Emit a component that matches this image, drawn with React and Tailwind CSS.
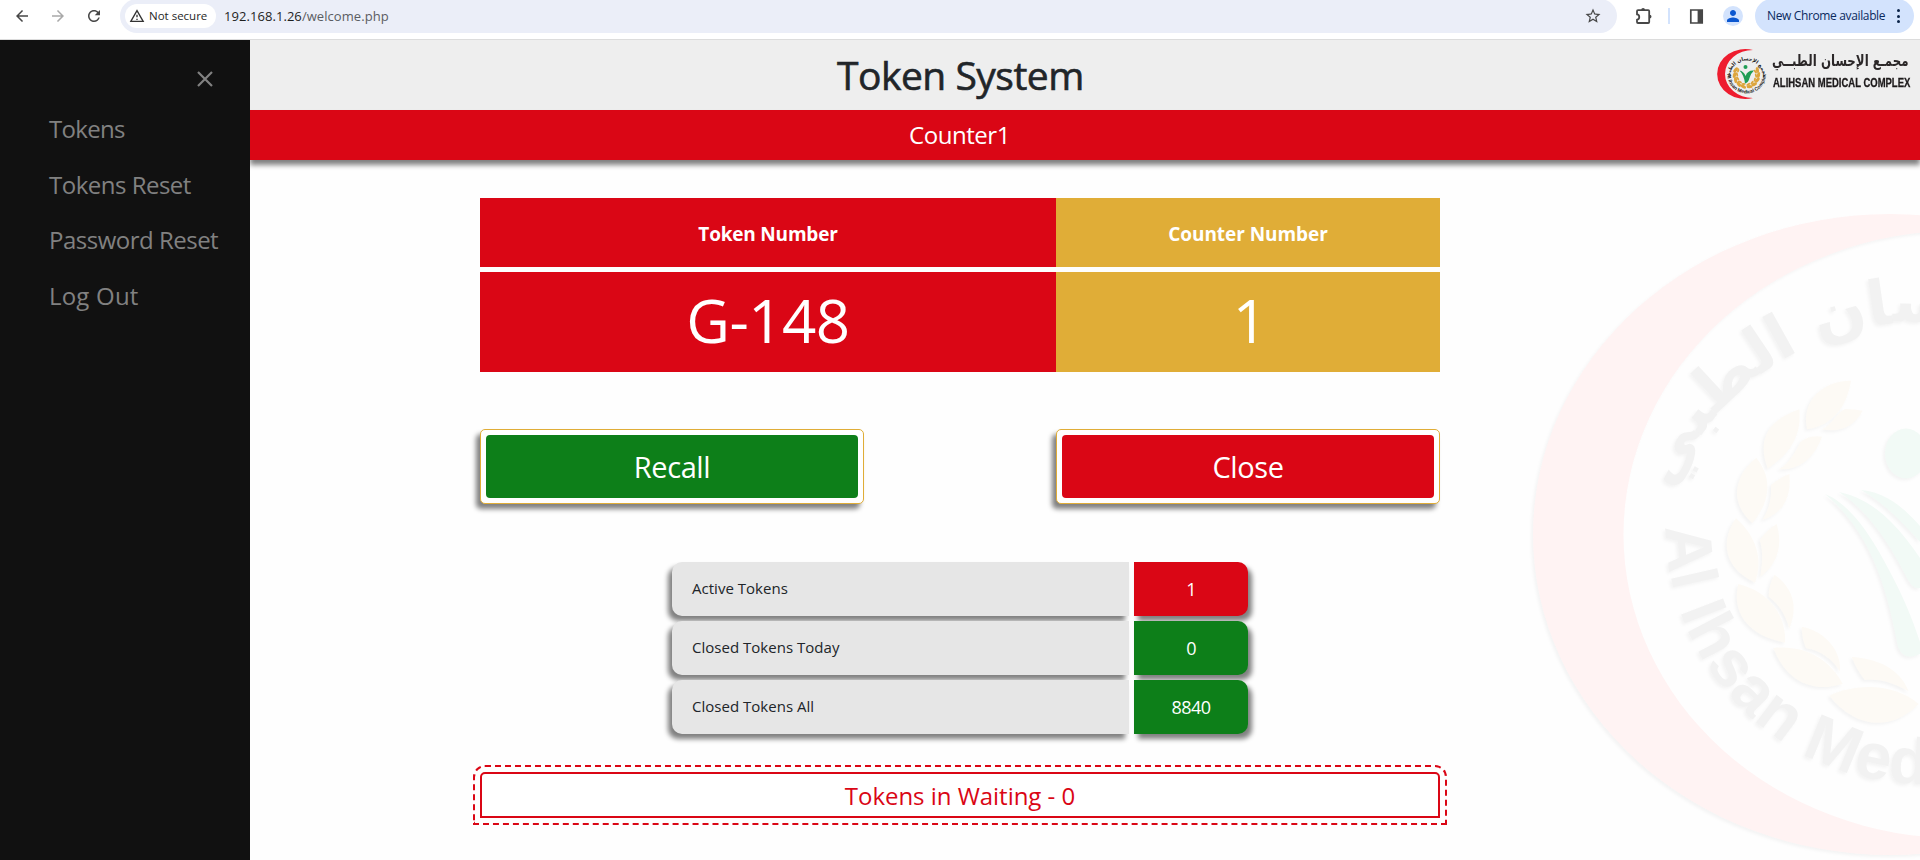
import React from "react";

const MENU = [
  { label: "Tokens", spacing: "tracking-[-0.7px]" },
  { label: "Tokens Reset", spacing: "tracking-[-0.5px]" },
  { label: "Password Reset", spacing: "tracking-[-0.5px]" },
  { label: "Log Out", spacing: "tracking-[0.2px]" },
];

const STATS = [
  { label: "Active Tokens", value: "1", tone: "bg-[#da0615]" },
  { label: "Closed Tokens Today", value: "0", tone: "bg-[#0d7f19]" },
  { label: "Closed Tokens All", value: "8840", tone: "bg-[#0d7f19]" },
];

function Glyph({ d, className }) {
  return (
    <svg viewBox="0 0 24 24" fill="currentColor" className={className}>
      <path d={d} />
    </svg>
  );
}

const ICONS = {
  back: "M20 11H7.83l5.59-5.59L12 4l-8 8 8 8 1.41-1.41L7.83 13H20v-2z",
  forward: "M4 11h12.17l-5.59-5.59L12 4l8 8-8 8-1.41-1.41L16.17 13H4v-2z",
  reload:
    "M17.65 6.35C16.2 4.9 14.21 4 12 4c-4.42 0-7.99 3.58-7.99 8s3.57 8 7.99 8c3.73 0 6.84-2.55 7.73-6h-2.08c-.82 2.33-3.04 4-5.65 4-3.31 0-6-2.69-6-6s2.69-6 6-6c1.66 0 3.14.69 4.22 1.78L13 11h7V4l-2.35 2.35z",
  warning:
    "M12 5.99 19.53 19H4.47L12 5.99M12 2 1 21h22L12 2zm1 14h-2v2h2v-2zm0-6h-2v4h2v-4z",
  star: "M22 9.24l-7.19-.62L12 2 9.19 8.63 2 9.24l5.46 4.73L5.82 21 12 17.27 18.18 21l-1.63-7.03L22 9.24zM12 15.4l-3.76 2.27 1-4.28-3.32-2.88 4.38-.38L12 6.1l1.71 4.04 4.38.38-3.32 2.88 1 4.28L12 15.4z",
  person:
    "M12 12c2.21 0 4-1.79 4-4s-1.79-4-4-4-4 1.79-4 4 1.79 4 4 4zm0 2c-2.67 0-8 1.34-8 4v2h16v-2c0-2.66-5.33-4-8-4z",
};

function BrowserBar() {
  return (
    <div className="flex h-10 shrink-0 items-start border-b border-[#dcdcdc] bg-white pr-1.5">
      <div className="flex h-8 items-center gap-[18px] pl-[13px] pr-[17px] text-[#474747]">
        <Glyph d={ICONS.back} className="size-[18px]" />
        <Glyph d={ICONS.forward} className="size-[18px] text-[#a9a9a9]" />
        <Glyph d={ICONS.reload} className="size-[18px]" />
      </div>
      <div className="-mt-px flex h-[34px] flex-1 items-center rounded-full bg-[#ebeef8] pl-[5px] pr-[15px]">
        <div className="flex h-6 w-[91px] items-center rounded-full bg-white pl-1">
          <Glyph d={ICONS.warning} className="size-4 text-[#333]" />
          <span className="ml-1 whitespace-nowrap text-[11.5px] leading-6 text-[#1f1f1f]">Not secure</span>
        </div>
        <div className="ml-2 whitespace-nowrap text-[13px] leading-6 tracking-[0.06px] text-[#5a5d62]">
          <span className="text-[#1f1f1f]">192.168.1.26</span>/welcome.php
        </div>
        <Glyph d={ICONS.star} className="ml-auto size-[18px] text-[#474747]" />
      </div>
      <div className="flex h-8 items-center pl-[18px]">
        <svg viewBox="0 0 18 18" className="size-[18px]" fill="none" stroke="#474747" strokeWidth="1.8">
          <path d="M2 4.2Q2 3.2 3 3.2H13.2Q14.2 3.2 14.2 4.2V15Q14.2 16 13.2 16H3Q2 16 2 15V12.6C5 12.4 5 7.6 2 7.4Z" strokeLinejoin="round" />
          <path d="M6.2 3a1.9 1.9 0 0 1 3.8 0zM14.6 7.7a1.9 1.9 0 0 1 0 3.8z" fill="#474747" stroke="none" />
        </svg>
        <div className="ml-[15px] h-4 w-0.5 bg-[#d3e3fd]" />
        <svg viewBox="0 0 15 15" className="ml-[19px] size-[15px]">
          <path d="M1.8 1h11.4v13H1.8z" fill="none" stroke="#474747" strokeWidth="1.7" />
          <path d="M8.6 1h5v13h-5z" fill="#474747" />
        </svg>
        <div className="ml-[19px] flex size-5 items-center justify-center rounded-full bg-[#d3e3fd]">
          <Glyph d={ICONS.person} className="size-[18px] text-[#0b57d0]" />
        </div>
      </div>
      <div className="-mt-px ml-3 flex h-[34px] w-[159px] items-center rounded-full bg-[#d3e3fd] pl-3">
        <span className="whitespace-nowrap text-[12px] tracking-[-0.36px] text-[#0a2a5e]">New Chrome available</span>
        <span className="ml-auto mr-3.5 flex flex-col gap-[2.5px]">
          <i className="size-[3px] rounded-full bg-[#0a2348]" />
          <i className="size-[3px] rounded-full bg-[#0a2348]" />
          <i className="size-[3px] rounded-full bg-[#0a2348]" />
        </span>
      </div>
    </div>
  );
}

function Sidebar() {
  return (
    <aside className="relative z-10 w-[250px] shrink-0 bg-[#111] text-[#818181]">
      <div className="flex h-[71px] justify-end pr-[37px] pt-[31px]">
        <svg viewBox="0 0 16 16" className="size-4" stroke="currentColor" strokeWidth="2.2">
          <path d="M1 1l14 14M15 1L1 15" />
        </svg>
      </div>
      <nav className="flex flex-col pl-[49px]">
        {MENU.map((item) => (
          <a key={item.label} className={`h-[55.6px] whitespace-nowrap text-[24px] leading-[36px] ${item.spacing}`}>
            {item.label}
          </a>
        ))}
      </nav>
    </aside>
  );
}

const LEAF_ANGLES = [205, 180, 155, 130, 105, 335, 0, 25, 50, 75];

function BrandMark() {
  return (
    <svg viewBox="0 0 50 50" className="h-[50px] w-[50px] overflow-visible">
      <defs>
        <path id="seal-top" d="M13 28A16.5 16.6 0 0 1 46 28" />
        <path id="seal-bottom" d="M10.2 25A19.4 19.4 0 0 0 49 25" />
      </defs>
      <path d="M36 1A28 25 0 1 0 36 49A28 24 0 0 1 36 1Z" fill="#ee1c2e" />
      {LEAF_ANGLES.map((a) => (
        <g key={a} transform={`translate(29.5 26) rotate(${a}) translate(12 0)`} fill="#dda53c">
          <ellipse rx="1.6" ry="3" transform="rotate(14)" />
          <ellipse cx="-2.6" rx="1" ry="2.2" transform="rotate(-14)" />
        </g>
      ))}
      <circle cx="28.5" cy="18" r="2" fill="#1f9d55" />
      <path d="M22.5 21.5Q26.5 22 28.6 27Q30.5 21 37 21.5Q34 24 32.5 29Q31.5 33.5 28 34.5Q27 26 22.5 21.5Z" fill="#1f9d55" />
      <text fontSize="5" fontWeight="700" fill="#222" fontFamily="DejaVu Sans" textAnchor="middle">
        <textPath href="#seal-top" startOffset="50%">مجمع الإحسان الطبي</textPath>
      </text>
      <text fontSize="4.9" fontWeight="700" fill="#222" fontFamily="Liberation Sans">
        <textPath href="#seal-bottom">Al Ihsan Medical Complex</textPath>
      </text>
    </svg>
  );
}

function Header() {
  return (
    <header className="relative flex h-[70px] items-center justify-end bg-[#eee] pr-2.5">
      <h1 className="mr-auto pl-[587px] text-[39px] font-medium leading-[70px] tracking-[-0.5px] text-[#212529] [-webkit-text-stroke:0.6px_#212529]">
        Token System
      </h1>
      <div className="flex gap-[6px] pb-0.5">
        <BrandMark />
        <div className="w-[137px]">
          <div dir="rtl" className="flex h-[27px] w-[137px] pr-px">
            <div className="origin-right scale-x-[0.76] whitespace-nowrap font-['DejaVu_Sans'] text-[15.5px] font-bold leading-[24px] text-[#2b2728]">
              مجمـع الإحسان الطبــي
            </div>
          </div>
          <div className="h-4 origin-left scale-x-[0.79] whitespace-nowrap font-['Liberation_Sans'] text-[12px] font-bold leading-[14px] text-[#1d1a1b] [-webkit-text-stroke:0.3px_#1d1a1b]">
            ALIHSAN MEDICAL COMPLEX
          </div>
        </div>
      </div>
    </header>
  );
}

const LEAVES_UPPER = [
  "M1053 572C985 570 900 620 921 718C1000 705 1040 650 1053 572Z",
  "M1088 662Q1065 658 1035 657C1010 668 1000 700 966 718C1010 728 1060 715 1088 662Z",
  "M898 658C820 685 765 735 803 836C870 790 905 740 898 658Z",
  "M966 740Q930 735 902 755C885 785 870 820 836 838C900 842 945 800 966 740Z",
  "M769 803C710 850 680 930 757 1000C815 930 815 860 769 803Z",
  "M868 852Q840 862 813 886C815 930 805 960 787 990C850 970 875 920 868 852Z",
];

const LEAVES_LOWER = [
  "M708 -5C660 60 670 145 765 188C790 120 770 50 708 -5Z",
  "M830 12Q800 30 779 60C792 100 785 135 781 170C830 135 850 80 830 12Z",
  "M715 192C695 270 735 345 855 368C860 290 810 215 715 192Z",
  "M824 164Q805 195 806 230C840 255 858 290 868 326C895 260 880 205 824 164Z",
  "M820 384C850 465 920 525 1028 492C990 420 920 375 820 384Z",
  "M905 320Q905 355 918 385C960 390 1000 420 1020 455C1025 395 980 335 905 320Z",
  "M988 527C1060 620 1170 640 1256 552C1190 495 1080 485 988 527Z",
  "M1055 411Q1070 450 1094 480C1140 475 1185 490 1226 514C1200 445 1130 415 1055 411Z",
];

function Watermark() {
  return (
    <svg
      viewBox="0 0 420 670"
      className="pointer-events-none absolute right-0 top-[30px] h-[670px] w-[420px]"
    >
      <defs>
        <filter id="soft" x="-10%" y="-10%" width="120%" height="120%" colorInterpolationFilters="sRGB">
          <feDropShadow dx="-2" dy="2" stdDeviation="1.8" floodColor="#000" floodOpacity="0.04" />
        </filter>
        <path id="ring-top" d="M172 300A267 267 0 0 1 668 300" />
        <path id="ring-bottom" d="M166 337A259 257 0 0 0 684 337" />
      </defs>
      <g filter="url(#soft)">
        <path
          fill="#fff3f3"
          fillRule="evenodd"
          d="M33 344.5A357 320.5 0 1 1 747 344.5A357 320.5 0 1 1 33 344.5ZM123.5 344.5A337 304 0 1 0 797.5 344.5A337 304 0 1 0 123.5 344.5Z"
        />
        <g fill="#fdfaf5" transform="scale(0.33333)">
          {LEAVES_UPPER.map((d) => (
            <path key={d} d={d} />
          ))}
        </g>
        <g fill="#fdfaf5" transform="translate(0 330) scale(0.33333)">
          {LEAVES_LOWER.map((d) => (
            <path key={d} d={d} />
          ))}
        </g>
        <g fill="#f2faf6">
          <ellipse cx="406" cy="263.5" rx="21" ry="25" />
          <path d="M325 304C350 314 371 345 389 380C404 408 412 428 420 452V464Q404 472 398 457C388 405 374 345 325 304Z" />
          <path d="M339 302C370 308 396 332 420 368V398Q414 400 408 390C392 358 370 322 339 302Z" />
          <path d="M361 300C386 302 404 318 420 336V352C402 332 384 313 361 300Z" />
        </g>
        <text fontSize="65" fontWeight="700" fill="#f2f2f2" fontFamily="Liberation Sans" letterSpacing="0.6">
          <textPath href="#ring-bottom">Al Ihsan Medical Complex</textPath>
        </text>
        <text fontSize="62" fontWeight="700" fill="#f2f2f2" fontFamily="DejaVu Sans">
          <textPath href="#ring-top">مجمع الإحسان الطبي</textPath>
        </text>
      </g>
    </svg>
  );
}

function ActionButton({ label, tone }) {
  return (
    <div className="h-[75px] w-96 rounded-[5px] border border-[#e0ad37] bg-white p-[5px] shadow-[-4px_5px_5px_gray]">
      <button className={`flex h-[63px] w-full justify-center rounded-[4px] text-[29px] leading-[64px] tracking-[-0.4px] text-white ${tone}`}>
        {label}
      </button>
    </div>
  );
}

export default function App() {
  return (
    <div className="flex h-[860px] w-[1920px] flex-col overflow-hidden bg-[#fefefe] font-['Open_Sans','Noto_Sans',sans-serif]">
      <BrowserBar />
      <div className="flex min-h-0 flex-1">
        <Sidebar />
        <div className="flex min-w-0 flex-1 flex-col">
          <Header />
          <div className="relative z-[1] h-[50px] shrink-0 bg-[#da0615] pl-[659px] text-[24px] leading-[50px] tracking-[-0.45px] text-white shadow-[0_5px_5px_gray]">
            Counter1
          </div>
          <main className="relative min-h-0 flex-1">
            <Watermark />
            <div className="relative ml-[230px] flex w-[960px] flex-col pt-[38px]">
              <div className="grid grid-cols-[576px_384px] gap-y-[5px] text-center text-white">
                <div className="h-[69px] bg-[#da0615] text-[19px] font-bold leading-[72px] tracking-[-0.2px]">Token Number</div>
                <div className="h-[69px] bg-[#e0ad37] text-[19px] font-bold leading-[72px] tracking-[-0.05px]">Counter Number</div>
                <div className="h-[100px] bg-[#da0615] text-[60px] leading-[96px] tracking-[-0.5px]">G-148</div>
                <div className="h-[100px] bg-[#e0ad37] pl-1 text-[60px] leading-[96px]">1</div>
              </div>
              <div className="mt-[57px] flex justify-between">
                <ActionButton label="Recall" tone="bg-[#0d7f19]" />
                <ActionButton label="Close" tone="bg-[#da0615]" />
              </div>
              <div className="mx-auto mt-[58px] flex w-[576px] flex-col gap-[5px]">
                {STATS.map((s) => (
                  <div key={s.label} className="flex h-[54px] gap-[5px]">
                    <div className="w-[457px] rounded-l-[10px] bg-[#e6e6e6] pl-5 text-[15px] leading-[53px] tracking-[0.02px] text-[#212529] shadow-[-4px_5px_5px_gray]">
                      {s.label}
                    </div>
                    <div className={`w-[114px] rounded-r-[10px] text-center text-[18px] leading-[55px] tracking-[-0.6px] text-white shadow-[4px_5px_5px_gray] ${s.tone}`}>
                      {s.value}
                    </div>
                  </div>
                ))}
              </div>
              <div className="mt-[38px] h-[46px] rounded-t-[5px] border-2 border-[#da0615] bg-white text-center text-[24px] leading-[43px] tracking-[-0.03px] text-[#da0615] outline-2 outline-offset-[5px] outline-dashed outline-[#da0615]">
                Tokens in Waiting - 0
              </div>
            </div>
          </main>
        </div>
      </div>
    </div>
  );
}
